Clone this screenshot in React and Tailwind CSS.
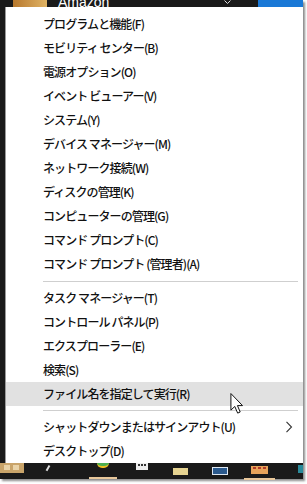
import React from 'react';

const group1 = [
  'プログラムと機能(F)',
  'モビリティ センター(B)',
  '電源オプション(O)',
  'イベント ビューアー(V)',
  'システム(Y)',
  'デバイス マネージャー(M)',
  'ネットワーク接続(W)',
  'ディスクの管理(K)',
  'コンピューターの管理(G)',
  'コマンド プロンプト(C)',
  'コマンド プロンプト (管理者)(A)',
];

const group2 = [
  'タスク マネージャー(T)',
  'コントロール パネル(P)',
  'エクスプローラー(E)',
  '検索(S)',
  'ファイル名を指定して実行(R)',
];

function Item({ label, active, arrow }) {
  return (
    <div
      className={`relative h-[24px] flex items-center pl-[37px] pr-[10px] ${active ? 'bg-[#e1e1e1]' : ''}`}
    >
      <span className="text-[12px] font-medium tracking-[-0.9px] text-[#111] leading-none whitespace-nowrap">{label}</span>
      {arrow && (
        <svg className="ml-auto w-[8px] h-[12px]" viewBox="0 0 8 12" fill="none" stroke="#333" strokeWidth="1.1">
          <polyline points="1.5 0.8 6.5 6 1.5 11.2" />
        </svg>
      )}
      {active && (
        <svg className="absolute left-[224px] top-[11px] w-[14px] h-[21px]" viewBox="0 0 12 19">
          <path d="M0.5 0.5 L0.5 15.5 L4 12.2 L6.6 18.2 L8.9 17.2 L6.4 11.4 L11 11.4 Z" fill="#fff" stroke="#111" strokeWidth="0.9" strokeLinejoin="round" />
        </svg>
      )}
    </div>
  );
}

function Separator({ h }) {
  return (
    <div className={`${h} flex items-center pl-[37px] pr-[5px]`}>
      <div className="h-px w-full bg-[#cfcfcf]" />
    </div>
  );
}

export default function App() {
  return (
    <div className="w-[307px] h-[484px] bg-white overflow-hidden" style={{ fontFamily: '"Noto Sans CJK JP", "Noto Sans", sans-serif' }}>
      <div className="w-[303px] h-[479px] bg-[#1a1a1a] flex flex-col shadow-[2px_2px_2px_rgba(0,0,0,0.45)]">
        {/* top window strip */}
        <div className="h-[7px] flex overflow-hidden shrink-0">
          <div className="ml-[13px] w-[34px] h-full bg-gradient-to-r from-[#b7782c] to-[#e0b465]" />
          <div className="ml-[11px] -mt-[6px] text-[14px] leading-[16px] text-white font-['Liberation_Sans']">Amazon</div>
          <svg className="ml-[115px] w-[7px] h-[5px]" viewBox="0 0 7 5" fill="none" stroke="#ddd" strokeWidth="1">
            <polyline points="0.5 0.5 3.5 3.5 6.5 0.5" />
          </svg>
          <div className="ml-auto w-[45px] h-full bg-[#1a78d6]" />
        </div>

        {/* context menu */}
        <div className="flex h-[456px] shrink-0">
          <div className="w-[5px] bg-[#1a1a1a]" />
          <div className="flex-1 bg-white border-l border-[#9a9a9a] pt-[5px]">
            {group1.map((l) => (
              <Item key={l} label={l} />
            ))}
            <Separator h="h-[10px]" />
            {group2.map((l, i) => (
              <Item key={l} label={l} active={i === 4} />
            ))}
            <Separator h="h-[9px]" />
            <Item label="シャットダウンまたはサインアウト(U)" arrow />
            <Item label="デスクトップ(D)" />
          </div>
        </div>

        {/* taskbar */}
        <div className="flex-1 relative flex items-start">
          <div className="w-[25px] h-[10px] bg-[#c9a46a] flex gap-[3px] px-[4px] pt-[2px]">
            <div className="w-[6px] h-[5px] bg-[#e9d3a8]" />
            <div className="w-[6px] h-[5px] bg-[#e9d3a8]" />
          </div>
          <div className="ml-[23px] mt-[2px] w-[2px] h-[6px] bg-[#ddd] rotate-[30deg]" />
          <div className="ml-[41px] flex flex-col items-center">
            <div className="w-[12px] h-[5px] rounded-b-full bg-[#4caf50] border-b-2 border-[#f0c020]" />
            <div className="mt-[9px] w-[28px] h-[2px] bg-[#e8c79a]" />
          </div>
          <div className="ml-[19px] w-[13px] h-[7px] bg-[#eee] flex items-start justify-center gap-[1px] pt-[1px]">
            <div className="w-[2px] h-[2px] bg-[#333]" />
            <div className="w-[2px] h-[2px] bg-[#333]" />
            <div className="w-[2px] h-[2px] bg-[#333]" />
          </div>
          <div className="ml-[25px] mt-[5px] w-[16px] h-[7px] bg-[#e6d391]" />
          <div className="ml-[24px] mt-[4px] w-[18px] h-[8px] bg-[#dfe8f2] p-[1px]">
            <div className="w-full h-full bg-[#2c5b8f]" />
          </div>
          <div className="ml-[16px] flex flex-col items-center">
            <div className="mt-[3px] w-[17px] h-[8px] bg-[#e7a35a] flex items-start justify-center gap-[2px] pt-[1px]">
              <div className="w-[3px] h-[2px] bg-[#b03a2a]" />
              <div className="w-[3px] h-[2px] bg-[#b03a2a]" />
              <div className="w-[3px] h-[2px] bg-[#b03a2a]" />
            </div>
            <div className="mt-[4px] w-[31px] h-[2px] bg-[#e8c79a]" />
          </div>
          <div className="ml-[23px] mt-[2px] w-[5px] h-[8px] bg-[#2a8a9a]" />
        </div>
      </div>
    </div>
  );
}
